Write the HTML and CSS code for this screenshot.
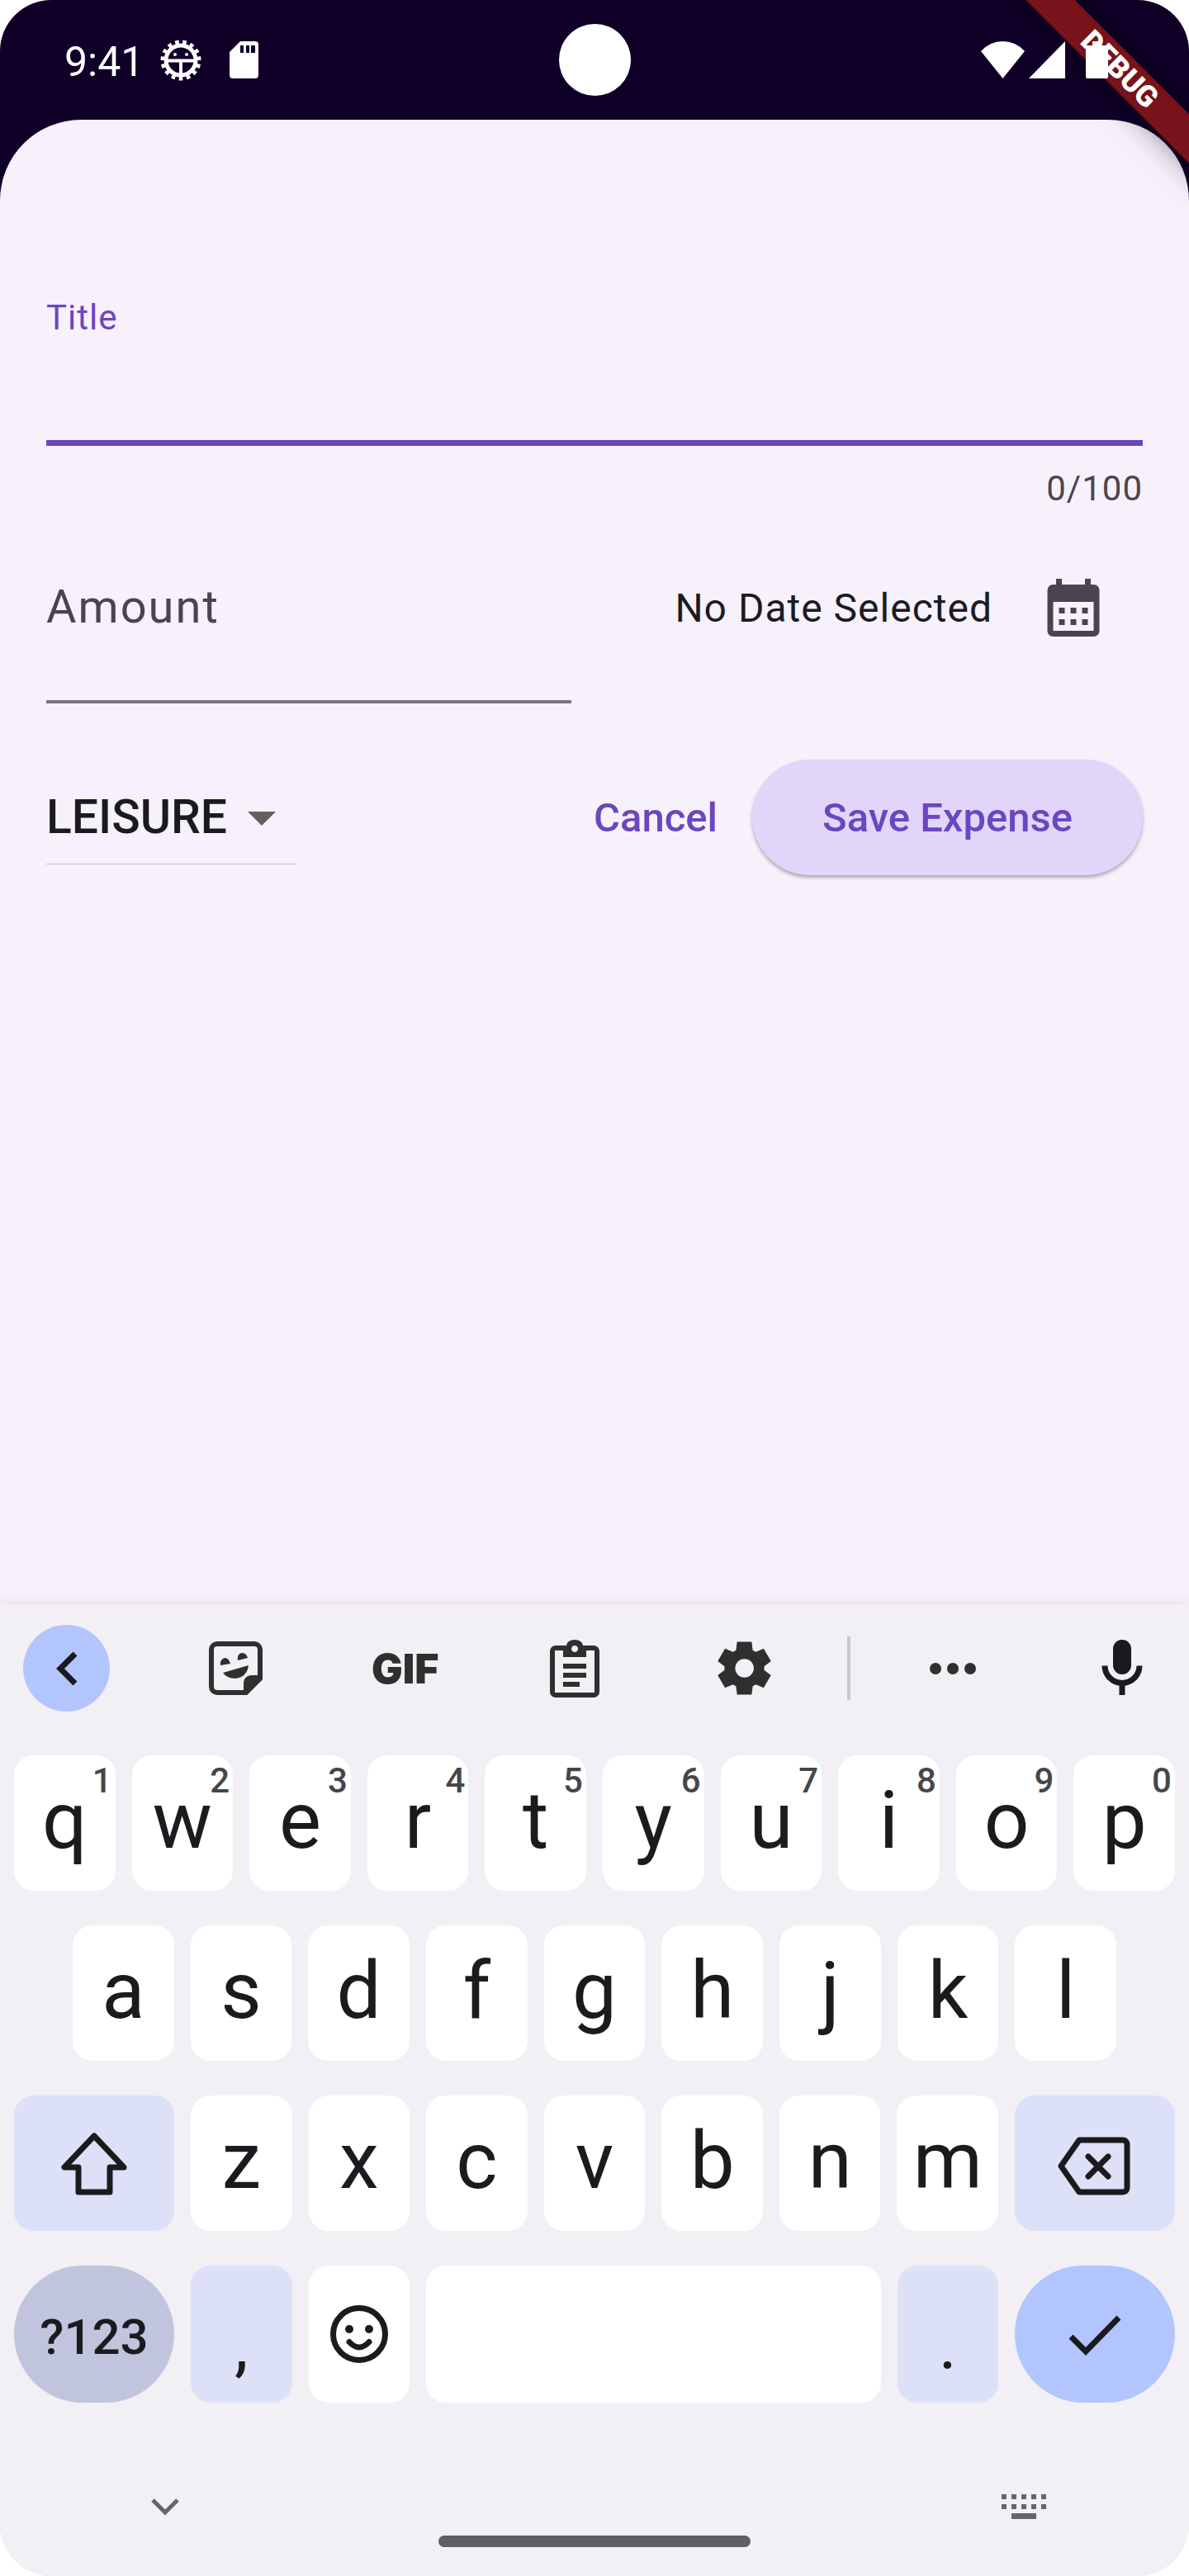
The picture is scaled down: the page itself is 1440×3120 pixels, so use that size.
FILE: index.html
```html
<!DOCTYPE html>
<html lang="en">
<head>
<meta charset="utf-8">
<meta name="viewport" content="width=device-width, initial-scale=1">
<title>New expense</title>
<link rel="stylesheet" href="styles.css">
</head>
<body>
<div class="screen">
  <header class="status-bar">
    <div class="status-group status-left">
      <span class="clock">9:41</span>
      <svg class="icon-bug" width="50" height="50" viewBox="0 0 50 50" fill="none" stroke="currentColor" aria-hidden="true">
        <circle cx="25" cy="25" r="18" stroke-width="5"/>
        <circle cx="25" cy="25" r="22" stroke-width="5" pathLength="15" stroke-dasharray=".5 .5" stroke-dashoffset=".5"/>
        <path d="M9 25.500H41M25 26V42" stroke-width="4"/>
        <g fill="currentColor" stroke="none"><circle cx="18" cy="18" r="2"/><circle cx="32" cy="18" r="2"/></g>
      </svg>
      <svg width="35" height="45" viewBox="0 0 35 45" fill="currentColor" aria-hidden="true">
        <path fill-rule="evenodd" d="M13 0H31a4 4 0 0 1 4 4V41a4 4 0 0 1-4 4H4a4 4 0 0 1-4-4V13ZM13 5v9h4V5ZM20 5v9h4V5ZM26 5v9h5V5Z"/>
      </svg>
    </div>
    <span class="camera"></span>
    <div class="status-group status-right">
      <svg width="53" height="45" viewBox="0 0 53 45" fill="currentColor" aria-hidden="true"><path d="M0 12Q11 0 26.500 0T53 12L26.500 45Z"/></svg>
      <svg width="44" height="45" viewBox="0 0 44 45" fill="currentColor" aria-hidden="true"><path d="M44 0V45H0Z"/></svg>
      <svg class="icon-battery" width="27" height="45" viewBox="0 0 27 45" fill="currentColor" aria-hidden="true"><path d="M8 0H19V5H25a2 2 0 0 1 2 2V43a2 2 0 0 1-2 2H2a2 2 0 0 1-2-2V7a2 2 0 0 1 2-2H8Z"/></svg>
    </div>
  </header>
  <div class="ribbon">DEBUG</div>

  <main class="sheet">
    <form class="form">
      <div class="field field-title">
        <label for="title">Title</label>
        <input id="title" type="text" maxlength="100">
        <span class="counter">0/100</span>
      </div>
      <div class="row">
        <div class="field field-amount">
          <label for="amount">Amount</label>
          <input id="amount" type="text" inputmode="decimal">
        </div>
        <div class="date">
          <span>No Date Selected</span>
          <button class="icon-button" type="button" aria-label="Pick a date">
            <svg width="84" height="84" viewBox="0 0 24 24" fill="currentColor"><path d="M19 4h-1V2h-2v2H8V2H6v2H5c-1.110 0-1.990.9-1.990 2L3 20a2 2 0 0 0 2 2h14c1.100 0 2-.9 2-2V6c0-1.100-.9-2-2-2zm0 16H5V10h14v10zM9 14H7v-2h2v2zm4 0h-2v-2h2v2zm4 0h-2v-2h2v2zm-8 4H7v-2h2v2zm4 0h-2v-2h2v2zm4 0h-2v-2h2v2z"/></svg>
          </button>
        </div>
      </div>
      <div class="actions">
        <div class="category">
          <select aria-label="Category"><option>LEISURE</option></select>
          <svg width="34" height="17" viewBox="0 0 34 17" fill="currentColor" aria-hidden="true"><path d="M0 0H34L17 17Z"/></svg>
        </div>
        <button class="button-text" type="button">Cancel</button>
        <button class="button-filled" type="button">Save Expense</button>
      </div>
    </form>
  </main>

  <section class="keyboard" aria-label="Keyboard">
    <div class="toolbar">
      <button class="tool tool-back" type="button" aria-label="Back"><svg width="84" height="84" viewBox="0 0 84 84" fill="none" stroke="currentColor" stroke-width="7"><path d="M52 24 34 42 52 60"/></svg></button>
      <button class="tool" type="button" aria-label="Stickers">
        <svg width="84" height="84" viewBox="0 0 84 84" fill="none" stroke="currentColor" stroke-width="6">
          <path d="M54 71H19a7 7 0 0 1-7-7V19a7 7 0 0 1 7-7H64a7 7 0 0 1 7 7V54Z"/>
          <g fill="currentColor" stroke="none"><path d="M51 72V61q0-11 11-11H72Z"/><path d="M23 38q-1-7 5-9 5 0 7 7ZM44 32q-1-7 4-9 6-1 8 6ZM26 47 57 38q-2 15-17 16-10-1-14-7Z"/></g>
        </svg>
      </button>
      <button class="tool tool-gif" type="button">GIF</button>
      <button class="tool" type="button" aria-label="Clipboard">
        <svg width="84" height="84" viewBox="0 0 84 84" fill="currentColor">
          <path fill-rule="evenodd" d="M19 14H32a10 7 0 0 1 20 0H65a7 7 0 0 1 7 7V70a7 7 0 0 1-7 7H19a7 7 0 0 1-7-7V21a7 7 0 0 1 7-7ZM18 20V71H66V20H56V28H28V20ZM42 14a4 4 0 1 0 .1 0Z"/>
          <path d="M28 36H56V42H28ZM28 47H56V53H28ZM28 58H48V64H28Z"/>
        </svg>
      </button>
      <button class="tool" type="button" aria-label="Settings">
        <svg width="77" height="77" viewBox="0 0 24 24" fill="currentColor"><path d="m9.250 22-.4-3.200q-.325-.125-.612-.3-.288-.175-.563-.375L4.700 19.375l-2.750-4.750 2.575-1.950Q4.500 12.500 4.500 12.337v-.675q0-.162.025-.337L1.950 9.375l2.750-4.750 2.975 1.250q.275-.2.575-.375.3-.175.6-.3l.4-3.200h5.500l.4 3.200q.325.125.613.3.287.175.562.375l2.975-1.250 2.750 4.750-2.575 1.950q.025.175.025.337v.675q0 .163-.05.338l2.575 1.950-2.750 4.750-2.950-1.250q-.275.2-.575.375-.3.175-.6.3l-.4 3.200Zm2.800-6.500q1.450 0 2.475-1.025Q15.550 13.450 15.550 12q0-1.450-1.025-2.475Q13.500 8.500 12.050 8.500q-1.475 0-2.488 1.025Q8.550 10.550 8.550 12q0 1.450 1.012 2.475Q10.575 15.500 12.050 15.500Z"/></svg>
      </button>
      <span class="divider"></span>
      <button class="tool" type="button" aria-label="More"><svg width="84" height="84" viewBox="0 0 84 84" fill="currentColor"><circle cx="21" cy="42" r="7"/><circle cx="42" cy="42" r="7"/><circle cx="63" cy="42" r="7"/></svg></button>
      <button class="tool tool-mic" type="button" aria-label="Voice input">
        <svg width="84" height="84" viewBox="0 0 84 84" fill="none" stroke="currentColor" stroke-width="7"><rect x="31" y="7" width="22" height="42" rx="11" fill="currentColor" stroke="none"/><path d="M21 38.500a21 21 0 0 0 42 0M42 59V74"/></svg>
      </button>
    </div>

    <div class="keys">
      <div class="key-row">
        <button class="key key-letter" type="button">q<small>1</small></button>
        <button class="key key-letter" type="button">w<small>2</small></button>
        <button class="key key-letter" type="button">e<small>3</small></button>
        <button class="key key-letter" type="button">r<small>4</small></button>
        <button class="key key-letter" type="button">t<small>5</small></button>
        <button class="key key-letter" type="button">y<small>6</small></button>
        <button class="key key-letter" type="button">u<small>7</small></button>
        <button class="key key-letter" type="button">i<small>8</small></button>
        <button class="key key-letter" type="button">o<small>9</small></button>
        <button class="key key-letter" type="button">p<small>0</small></button>
      </div>
      <div class="key-row key-row-inset">
        <button class="key key-letter" type="button">a</button>
        <button class="key key-letter" type="button">s</button>
        <button class="key key-letter" type="button">d</button>
        <button class="key key-letter" type="button">f</button>
        <button class="key key-letter" type="button">g</button>
        <button class="key key-letter" type="button">h</button>
        <button class="key key-letter" type="button">j</button>
        <button class="key key-letter" type="button">k</button>
        <button class="key key-letter" type="button">l</button>
      </div>
      <div class="key-row">
        <button class="key key-wide key-tinted" type="button" aria-label="Shift">
          <svg width="84" height="84" viewBox="0 0 84 84" fill="none" stroke="currentColor" stroke-width="7" stroke-linejoin="round"><path d="M42 9 6 47H23V77H61V47H78Z"/></svg>
        </button>
        <button class="key key-letter" type="button">z</button>
        <button class="key key-letter" type="button">x</button>
        <button class="key key-letter" type="button">c</button>
        <button class="key key-letter" type="button">v</button>
        <button class="key key-letter" type="button">b</button>
        <button class="key key-letter" type="button">n</button>
        <button class="key key-letter" type="button">m</button>
        <button class="key key-wide key-tinted" type="button" aria-label="Backspace">
          <svg width="90" height="84" viewBox="0 0 90 84" fill="none" stroke="currentColor" stroke-width="7" stroke-linejoin="round"><path d="M26 14H79a5 5 0 0 1 5 5V72a5 5 0 0 1-5 5H26L4 45.500Z"/><path d="M37 34 61 58M61 34 37 58" stroke-linecap="round"/></svg>
        </button>
      </div>
      <div class="key-row key-row-bottom">
        <button class="key key-wide key-pill key-symbols" type="button">?123</button>
        <button class="key key-tinted key-punctuation" type="button">,</button>
        <button class="key" type="button" aria-label="Emoji">
          <svg width="84" height="84" viewBox="0 0 84 84" fill="none" stroke="currentColor" stroke-width="7"><circle cx="42" cy="42" r="31.500"/><path d="M30 51.500q12 13 24 0" stroke-linecap="round"/><g fill="currentColor" stroke="none"><circle cx="30" cy="36" r="5"/><circle cx="54" cy="36" r="5"/></g></svg>
        </button>
        <button class="key key-space" type="button" aria-label="Space"></button>
        <button class="key key-tinted key-punctuation" type="button">.</button>
        <button class="key key-wide key-pill key-done" type="button" aria-label="Done">
          <svg width="84" height="84" viewBox="0 0 84 84" fill="none" stroke="currentColor" stroke-width="7"><path d="M13 45 31 63 71 22"/></svg>
        </button>
      </div>
    </div>

    <nav class="nav-bar">
      <button class="nav-button" type="button" aria-label="Hide keyboard"><svg width="84" height="84" viewBox="0 0 84 84" fill="none" stroke="currentColor" stroke-width="5"><path d="M27 34 42 49 57 34"/></svg></button>
      <span class="home-bar"></span>
      <button class="nav-button" type="button" aria-label="Switch keyboard"><svg width="84" height="84" viewBox="0 0 84 84" fill="currentColor"><path d="M15 27h6v6h-6ZM27 27h6v6h-6ZM39 27h6v6h-6ZM51 27h6v6h-6ZM63 27h6v6h-6ZM15 39h6v6h-6ZM27 39h6v6h-6ZM39 39h6v6h-6ZM51 39h6v6h-6ZM63 39h6v6h-6ZM27 50h30v7H27Z"/></svg></button>
    </nav>
  </section>
</div>
</body>
</html>
```
FILE: styles.css
```css
:root {
  --primary: #6a46bf;
  --ink: #1b1b1f;
  --muted: #49454f;
  --sheet: #f7f1fc;
  --keyboard: #f2eff5;
  --key-tint: #dde1f8;
  --accent: #b2c5ff;
}

* { box-sizing: border-box; }

body {
  margin: 0;
  background: #fff;
  color: var(--ink);
  font-family: Roboto, "Liberation Sans", sans-serif;
}

button, input, select {
  margin: 0;
  padding: 0;
  border: 0;
  background: none;
  color: inherit;
  font: inherit;
}

svg { display: block; flex: none; }

.screen {
  position: relative;
  display: flex;
  flex-direction: column;
  min-height: 100vh;
  overflow: hidden;
  border-radius: 62px;
  background: linear-gradient(#100028 50%, var(--keyboard) 50%);
}

/* Status bar */
.status-bar {
  display: flex;
  align-items: center;
  justify-content: space-between;
  height: 145px;
  padding: 0 98px 0 78px;
  color: #fff;
}

.status-group { display: flex; align-items: center; }
.clock { padding-top: 5px; font-size: 50px; line-height: 58px; }
.icon-bug { margin: 0 34px 0 20px; }
.status-right { position: relative; z-index: 2; gap: 5px; }
.icon-battery { margin-left: 20px; }

.camera {
  position: absolute;
  top: 29px;
  left: 50%;
  width: 87px;
  height: 87px;
  margin-left: -43px;
  border-radius: 50%;
  background: #fff;
}

.ribbon {
  position: absolute;
  z-index: 1;
  top: 63px;
  right: -116px;
  width: 400px;
  height: 42px;
  background: #78121b;
  box-shadow: 0 0 36px rgba(0, 0, 0, .5);
  color: #fff;
  font-size: 36px;
  font-weight: 900;
  line-height: 42px;
  text-align: center;
  transform: rotate(45deg);
}

/* Expense form */
.sheet {
  flex: 1;
  padding: 216px 56px 56px;
  border-radius: 98px 98px 0 0;
  background: var(--sheet);
}

.field { display: flex; flex-direction: column; }
.field input { width: 100%; outline: 0; font-size: 56px; }

.field-title label { color: var(--primary); font-size: 42px; line-height: 48px; letter-spacing: 1px; }
.field-title input { height: 131px; border-bottom: 7px solid var(--primary); }

.counter {
  align-self: flex-end;
  margin-top: 28px;
  color: var(--muted);
  font-size: 42px;
  line-height: 48px;
  letter-spacing: 1px;
}

.row {
  display: grid;
  grid-template-columns: 1fr 1fr;
  column-gap: 56px;
  margin-top: 36px;
}

.field-amount { padding-top: 51px; }
.field-amount label { color: var(--muted); font-size: 56px; line-height: 64px; letter-spacing: 2px; }
.field-amount input { height: 85px; border-bottom: 4px solid #79747e; }

.date {
  display: flex;
  align-items: center;
  align-self: start;
  justify-content: flex-end;
  gap: 14px;
  font-size: 48px;
  letter-spacing: 1px;
  white-space: nowrap;
}

.icon-button {
  display: flex;
  align-items: center;
  justify-content: center;
  width: 168px;
  height: 168px;
  color: var(--muted);
}

.actions { display: flex; align-items: center; margin-top: 68px; }

.category { position: relative; width: 303px; margin-right: auto; }

.category select {
  width: 100%;
  height: 114px;
  appearance: none;
  border-bottom: 1px solid #c4bfc9;
  border-radius: 0;
  font-size: 57px;
  font-weight: 500;
}

.category svg {
  position: absolute;
  top: 50px;
  right: 25px;
  color: #616161;
  pointer-events: none;
}

.button-text, .button-filled { color: var(--primary); font-size: 49px; font-weight: 500; }
.button-text { height: 140px; padding: 0 42px; }

.button-filled {
  height: 140px;
  padding: 0 85px;
  border-radius: 70px;
  background: #e1d5fa;
  box-shadow: 0 3px 4px rgba(0, 0, 0, .3);
}

/* Keyboard */
.keyboard {
  background: var(--keyboard);
  box-shadow: 0 0 12px rgba(60, 50, 90, .12);
}

.toolbar {
  display: flex;
  align-items: center;
  justify-content: space-between;
  padding: 25px 28px 53px;
  color: #2f2f2f;
}

.tool {
  display: flex;
  align-items: center;
  justify-content: center;
  width: 105px;
  height: 105px;
  border-radius: 50%;
}

.tool-back { background: var(--accent); color: var(--ink); }
.tool-gif { font-family: Inter, sans-serif; font-size: 50px; font-weight: 900; }
.tool-mic { color: var(--ink); }
.divider { width: 4px; height: 77px; margin: 0 -28px; background: #cac8cf; }

.keys { display: flex; flex-direction: column; gap: 42px; padding: 0 17px; }
.key-row { display: flex; gap: 20px; height: 164px; }
.key-row-inset { padding: 0 71px; }
.key-row-bottom { height: 166px; }

.key {
  position: relative;
  display: flex;
  flex: 2 0 0px;
  align-items: center;
  justify-content: center;
  min-width: 0;
  border-radius: 24px;
  background: #fff;
  font-size: 96px;
  line-height: 120px;
}

.key-letter { padding-bottom: 6px; }

.key small {
  position: absolute;
  top: 9px;
  right: 4px;
  color: #46464a;
  font-size: 42px;
  font-weight: 500;
  line-height: 44px;
}

.key-wide { flex: 3 0 10px; }
.key-space { flex: 8 0 60px; }
.key-tinted { background: var(--key-tint); }
.key-pill { border-radius: 83px; }
.key-symbols { padding-top: 8px; background: #c0c5dd; font-size: 60px; font-weight: 500; }
.key-punctuation { padding-top: 28px; font-size: 84px; }
.key-done { background: var(--accent); }

.nav-bar {
  display: flex;
  align-items: flex-start;
  justify-content: space-between;
  padding: 84px 158px 35px;
  color: #676569;
}

.home-bar {
  align-self: flex-end;
  width: 378px;
  height: 14px;
  margin-top: 77px;
  border-radius: 7px;
  background: #606062;
}
```
